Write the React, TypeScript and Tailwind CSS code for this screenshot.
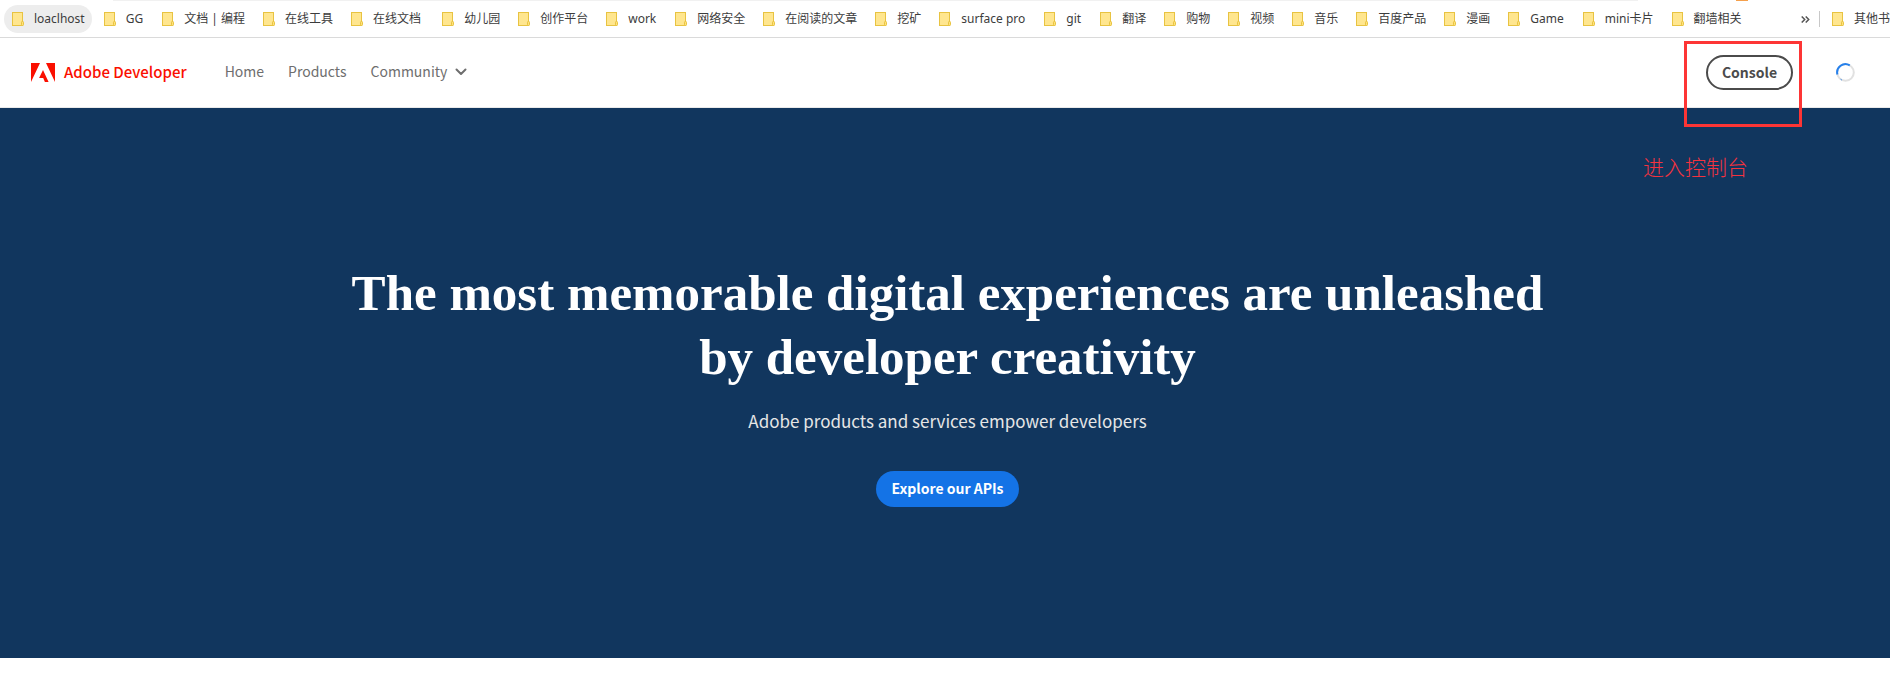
import React from 'react';

const bookmarks = [
  'loaclhost', 'GG', '文档 | 编程', '在线工具', '在线文档 ', '幼儿园', '创作平台', 'work', '网络安全',
  '在阅读的文章', '挖矿', 'surface pro', 'git', '翻译', '购物', '视频', '音乐', '百度产品', '漫画',
  'Game', 'mini卡片', '翻墙相关',
];

function FolderIcon() {
  return (
    <svg width="12" height="14" viewBox="0 0 12 14" className="shrink-0" aria-hidden="true">
      <rect x="0.5" y="0.5" width="10" height="13" fill="#ffe68f" stroke="#e8c341" />
      <rect x="9.5" y="9.5" width="2" height="4" rx="0.8" fill="#ffe27a" stroke="#e8c341" />
    </svg>
  );
}

function Bookmark({ label, active = false }: { label: string; active?: boolean }) {
  const latin = /^[a-z ]+$/i.test(label);
  return (
    <a
      href="#"
      className={
        'flex h-7 shrink-0 items-center gap-[10px] whitespace-pre rounded-full pl-2 ' +
        (latin ? 'pr-[7px] ' : 'pr-[6px] ') +
        (active ? 'bg-[#ededed]' : '')
      }
    >
      <FolderIcon />
      <span>{label}</span>
    </a>
  );
}

function BookmarkBar() {
  return (
    <nav
      aria-label="Bookmarks"
      className="relative flex h-[38px] items-center border-b border-[#dadada] bg-white pl-1 pt-px font-['Noto_Sans','Noto_Sans_CJK_SC',sans-serif] text-xs text-[#3c3c3c]"
    >
      <div className="absolute left-[113px] right-[252px] top-0 h-px bg-[#f1f1f1]" />
      <div className="absolute right-[142px] top-0 h-px w-3 bg-[#f5a04c]" />
      <div className="flex min-w-0 flex-1 gap-1 overflow-hidden">
        {bookmarks.map((label, i) => (
          <Bookmark key={label} label={label} active={i === 0} />
        ))}
      </div>
      <button type="button" aria-label="More bookmarks" className="mr-[9px] flex h-4 w-[9px] items-center">
        <svg width="9" height="7" viewBox="0 0 9 7" fill="none" stroke="#555" strokeWidth="1.5">
          <path d="M0.7 0.5 3.7 3.5 0.7 6.5M4.7 0.5 7.7 3.5 4.7 6.5" />
        </svg>
      </button>
      <div className="h-4 w-px bg-[#c8c8c8]" />
      <div className="flex w-[70px] overflow-hidden pl-1">
        <Bookmark label="其他书签" />
      </div>
    </nav>
  );
}

function Header() {
  return (
    <header className="flex h-[70px] items-center border-b border-[#eaeaea] bg-white pl-[31px] pr-[35px] text-[14px] text-[#6e6e6e]">
      <a href="#" className="flex items-center gap-[9px] pb-px text-[15px] font-medium text-[#fa0f00]">
        <svg width="24" height="19" viewBox="0 0 24 20" preserveAspectRatio="none" fill="#fa0f00" aria-hidden="true">
          <path d="M0 0h9L0 20zM24 0h-9l9 20zM12 7.4 17.6 20h-3.7l-1.7-4.1H8.1z" />
        </svg>
        Adobe Developer
      </a>
      <nav aria-label="Main" className="ml-[38px] flex items-center gap-6 pb-0.5">
        <a href="#">Home</a>
        <a href="#">Products</a>
        <button type="button" className="flex items-center gap-2">
          Community
          <svg width="12" height="8" viewBox="0 0 12 8" fill="none" stroke="#6e6e6e" strokeWidth="2" strokeLinecap="round" strokeLinejoin="round">
            <path d="M1.5 1.5 6 6l4.5-4.5" />
          </svg>
        </button>
      </nav>
      <button
        type="button"
        className="ml-auto flex h-[35px] w-[87px] items-center justify-center rounded-full border-2 border-[#4b4b4b] font-bold text-[#4b4b4b]"
      >
        Console
      </button>
      <svg width="19" height="19" viewBox="0 0 19 19" fill="none" strokeWidth="2" className="ml-[43px]" role="img" aria-label="Loading">
        <circle cx="9.5" cy="9.5" r="8.3" stroke="#e1e1e1" />
        <path d="M1.4 11.5A8.3 8.3 0 0 1 13.8 2.4" stroke="#2680eb" />
        <path d="M4.6 16.2l1.2.8" stroke="#2680eb" strokeWidth="1" />
      </svg>
    </header>
  );
}

function Hero() {
  return (
    <main className="flex h-[550px] flex-col items-center justify-center bg-[#11365e] pl-[5px] pt-px text-center text-white">
      <h1 className="max-w-[1280px] font-['Liberation_Serif',serif] text-[51px] font-bold leading-[64px]">
        The most memorable digital experiences are unleashed
        <br />
        by developer creativity
      </h1>
      <p className="mt-[18px] text-[17px] leading-[28px] text-[#e6e6e6]">
        Adobe products and services empower developers
      </p>
      <a
        href="#"
        className="mt-9 flex h-9 w-[143px] items-center justify-center rounded-full bg-[#1473e6] text-[14px] font-bold"
      >
        Explore our APIs
      </a>
    </main>
  );
}

function Annotation() {
  return (
    <>
      <div className="absolute right-[88px] top-[41px] h-[86px] w-[118px] border-[3px] border-[#fd3535]" />
      <p className="absolute right-[142px] top-[150px] text-[21px] font-light leading-8 text-[#f5333f]">
        进入控制台
      </p>
    </>
  );
}

export default function App() {
  return (
    <div className="relative min-h-screen overflow-hidden bg-white font-['Noto_Sans_CJK_SC',sans-serif]">
      <BookmarkBar />
      <Header />
      <Hero />
      <Annotation />
    </div>
  );
}
